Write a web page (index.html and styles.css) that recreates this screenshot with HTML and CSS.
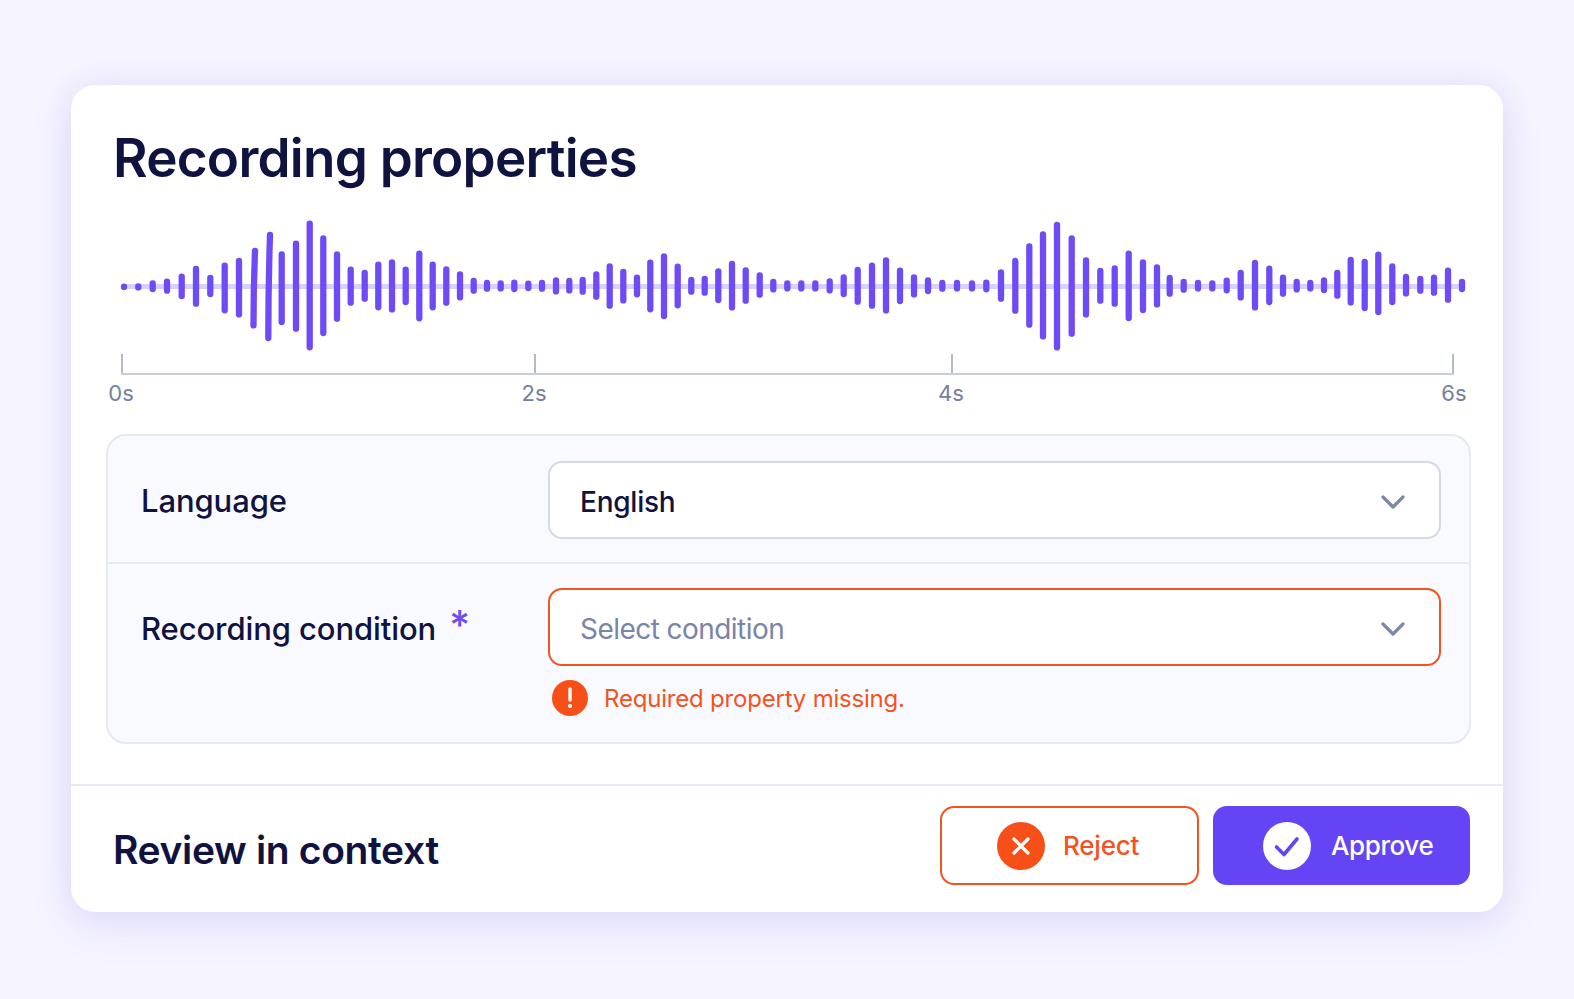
FILE: index.html
```html
<!DOCTYPE html>
<html lang="en">
<head>
    <meta charset="UTF-8">
    <title>Recording properties</title>
    <link rel="stylesheet" href="styles.css">
</head>
<body>
    <div class="card">
        <div class="card-body">
            <h1>Recording properties</h1>

            <svg class="wave" viewBox="106 216 1364 138" width="1364" height="138">
                <path class="wave-mid" d="M124 286.6H1462"/>
                <path class="wave-bars" d="M124 286.6v.4M138.3 286.4v1M152.7 283.3v5.7M167 281.6v9.1M181.7 276.6v19.4M196 269v34.7M210.3 278v16.1M224.7 265.6v44.7M239 261v53.4M255 251Q253.5 288 253.5 325.4M270 235Q268.3 285 268.3 338.1M281.7 254.3v67.7M296 243.6v85.1M309.7 223.6v123.7M323.3 238.3v94.7M337 254.3v64.4M350.7 269.6v33.1M364.7 273v25.7M378.3 264.6v42.7M392 262.3v47.1M405.7 269.6v32.4M419.3 253.6v64.7M432.7 264.6v42.7M446.3 269.3v33.4M460 274.3v23.1M473.7 281v9.7M487 283v5.7M500.7 283.3v5.1M514.3 282.6v6.4M528.3 283.6v4.4M542 283v5.7M556 280.3v11.1M569.3 281v9.4M582.7 280v11.7M596.3 274.3v22.4M609.7 266.3v39.4M623.3 272v28.4M637 277.6v16.7M650.3 262.6v46.7M664 256.3v59.7M677.7 266.6v38.7M691.3 280v11.7M704.7 279v13.7M718.3 271.3v28.7M732 264v43.4M745.7 270.3v30.4M759.7 275.3v19.4M773.3 282v7.4M787.3 283.3v5.1M801.3 283.3v5.1M815.3 283.3v5.1M829.7 281.3v9.1M843.7 277.3v16.7M857.7 270v31.7M872 265.6v40.1M886 260.3v50.1M900 270.6v30.4M914 277.3v17.1M928 280.3v10.7M942.3 283v5.7M957 283v5.4M972 283.3v5.1M986.3 282.6v6.7M1001 272.3v26.4M1015.3 261v49.7M1029.3 246.3v78.4M1043 234.3v102.1M1057 225v122.4M1071.7 238.3v95.4M1086 260.3v54.1M1100.3 271v29.7M1114.7 268.3v35.4M1128.7 253.6v64.4M1143 262.3v47.7M1157 267.3v37.1M1169.7 278v15.7M1183.7 282v7.7M1198 283v5.4M1212.3 283.3v5.1M1226.7 280.6v9.7M1240.7 273v24.4M1255 263v44.4M1269.3 268.6v33.4M1283 277.6v16.1M1296.7 282v7.4M1310.3 283v5.4M1324 280.3v9.7M1337.3 273v22.7M1350.7 260v42.4M1364.7 262v46.1M1378.3 254.6v57.4M1392.3 266.3v35.7M1406 277v16.4M1420.3 279v11.7M1434 277.6v15.1M1448 270.6v29.1M1462 282v7.1"/>
            </svg>

            <div class="axis">
                <div class="tick"></div>
                <div class="tick"></div>
                <div class="tick"></div>
                <div class="tick"></div>
            </div>
            <div class="axis-labels">
                <span>0s</span>
                <span>2s</span>
                <span>4s</span>
                <span class="axis-end">6s</span>
            </div>

            <div class="panel">
                <div class="row">
                    <div class="row-label">Language</div>
                    <div class="row-field">
                        <div class="select">
                            English
                            <svg class="chevron" viewBox="0 0 24 14" width="24" height="14"><path d="M2 2l10 10L22 2"/></svg>
                        </div>
                    </div>
                </div>
                <div class="row row-last">
                    <div class="row-label">Recording condition <span class="required">*</span></div>
                    <div class="row-field">
                        <div class="select select-error">
                            Select condition
                            <svg class="chevron" viewBox="0 0 24 14" width="24" height="14"><path d="M2 2l10 10L22 2"/></svg>
                        </div>
                        <div class="error-msg">
                            <svg class="error-icon" viewBox="0 0 36 36" width="36" height="36">
                                <circle cx="18" cy="18" r="18" fill="#f64f17"/>
                                <path d="M18 9v11" stroke="#fff" stroke-width="3.4" stroke-linecap="round"/>
                                <circle cx="18" cy="26" r="2.1" fill="#fff"/>
                            </svg>
                            Required property missing.
                        </div>
                    </div>
                </div>
            </div>
        </div>

        <div class="card-footer">
            <h2>Review in context</h2>
            <div class="actions">
                <button class="btn btn-reject">
                    <svg viewBox="0 0 48 48" width="48" height="48">
                        <circle cx="24" cy="24" r="24" fill="#f64f17"/>
                        <path d="M17 17l14 14M31 17L17 31" stroke="#fff" stroke-width="3.2" stroke-linecap="round"/>
                    </svg>
                    Reject
                </button>
                <button class="btn btn-approve">
                    <svg viewBox="0 0 48 48" width="48" height="48">
                        <circle cx="24" cy="24" r="24" fill="#fff"/>
                        <path d="M13.5 25l7.5 7.5L34 17" fill="none" stroke="#6544f6" stroke-width="3.6" stroke-linecap="round" stroke-linejoin="round"/>
                    </svg>
                    Approve
                </button>
            </div>
        </div>
    </div>
</body>
</html>
```

FILE: styles.css
```css
html, body {
    height: 100%;
}

body {
    margin: 0;
    padding: 85px 71px 0;
    box-sizing: border-box;
    overflow: hidden;
    background-color: #f5f4ff;
    font-family: "Inter", "Liberation Sans", sans-serif;
    color: #10123f;
}

.card {
    background-color: #fff;
    border-radius: 24px;
    box-shadow: 0 0 30px rgba(98, 78, 226, 0.09), 0 14px 44px rgba(98, 78, 226, 0.1);
}

.card-body {
    padding: 40px 32px 40px 35px;
}

h1 {
    margin: 0 0 0 7px;
    font-size: 53px;
    line-height: 66px;
    font-weight: 600;
    letter-spacing: -0.75px;
}

.wave {
    display: block;
    margin-top: 25px;
}

.wave-mid {
    fill: none;
    stroke: #d8d1fc;
    stroke-width: 5;
}

.wave-bars {
    fill: none;
    stroke: #6f4bf6;
    stroke-width: 6.3;
    stroke-linecap: round;
}

.axis {
    display: grid;
    grid-template-columns: 413px 417px 501px 2px;
    margin-left: 15px;
    border-bottom: 2px solid #c8cddf;
    width: 1333px;
}

.tick {
    height: 19px;
    border-left: 2px solid #b4bace;
}

.axis-labels {
    display: grid;
    grid-template-columns: 413px 417px 501px 2px;
    margin: 5px 0 0 15px;
    padding-bottom: 1px;
    width: 1333px;
    font-size: 22px;
    line-height: 26px;
    color: #75809f;
}

.axis-labels span {
    justify-self: start;
    transform: translateX(-50%);
}

.axis-labels .axis-end {
    margin-left: 2px;
}

.panel {
    margin-top: 27px;
    background-color: #f9faff;
    border: 2px solid #e6e8f4;
    border-radius: 20px;
}

.row {
    display: flex;
    padding: 25px 28px 23px 33px;
    border-bottom: 2px solid #e6e8f4;
}

.row-last {
    border-bottom: none;
    padding-top: 24px;
    padding-bottom: 26px;
}

.row-label {
    width: 407px;
    flex-shrink: 0;
    height: 78px;
    line-height: 79px;
    font-size: 31px;
    font-weight: 550;
    letter-spacing: -0.1px;
}

.row-last .row-label {
    line-height: 81px;
}

.required {
    display: inline-block;
    margin-left: 5px;
    color: #6f4bf6;
    font-size: 40px;
    line-height: 0;
    vertical-align: 1px;
}

.row-field {
    flex: 1;
}

.select {
    display: flex;
    justify-content: space-between;
    align-items: center;
    box-sizing: border-box;
    height: 78px;
    padding: 3px 34px 0 30px;
    background-color: #fff;
    border: 2px solid #d4d9e9;
    border-radius: 14px;
    font-size: 28px;
    font-weight: 500;
    letter-spacing: -0.25px;
}

.select-error {
    border-color: #f2531f;
    border-width: 2.5px;
    color: #7a84a6;
    font-weight: 400;
    letter-spacing: -0.55px;
}

.chevron path {
    fill: none;
    stroke: #7d88a8;
    stroke-width: 3.2;
    stroke-linecap: round;
    stroke-linejoin: round;
}

.error-msg {
    display: flex;
    align-items: center;
    gap: 16px;
    margin: 14px 0 0 4px;
    font-size: 24px;
    letter-spacing: -0.2px;
    color: #f2531f;
}

.card-footer {
    display: flex;
    justify-content: space-between;
    padding: 20px 33px 27px 42px;
    border-top: 2px solid #e9eaf6;
}

h2 {
    margin: 20px 0 0;
    font-size: 39px;
    line-height: 48px;
    font-weight: 600;
    letter-spacing: -0.35px;
}

.actions {
    display: flex;
    gap: 14px;
}

.btn {
    display: flex;
    align-items: center;
    box-sizing: border-box;
    height: 79px;
    font-family: inherit;
    font-size: 26px;
    font-weight: 500;
    border-radius: 14px;
    cursor: pointer;
}

.btn-reject {
    width: 259px;
    gap: 18px;
    padding: 0 0 0 55px;
    background-color: #fff;
    border: 2px solid #f2531f;
    color: #f2531f;
    letter-spacing: -0.2px;
}

.btn-approve {
    width: 257px;
    gap: 20px;
    padding: 0 0 0 50px;
    background-color: #6544f6;
    border: none;
    color: #fff;
    letter-spacing: -0.4px;
}
```
